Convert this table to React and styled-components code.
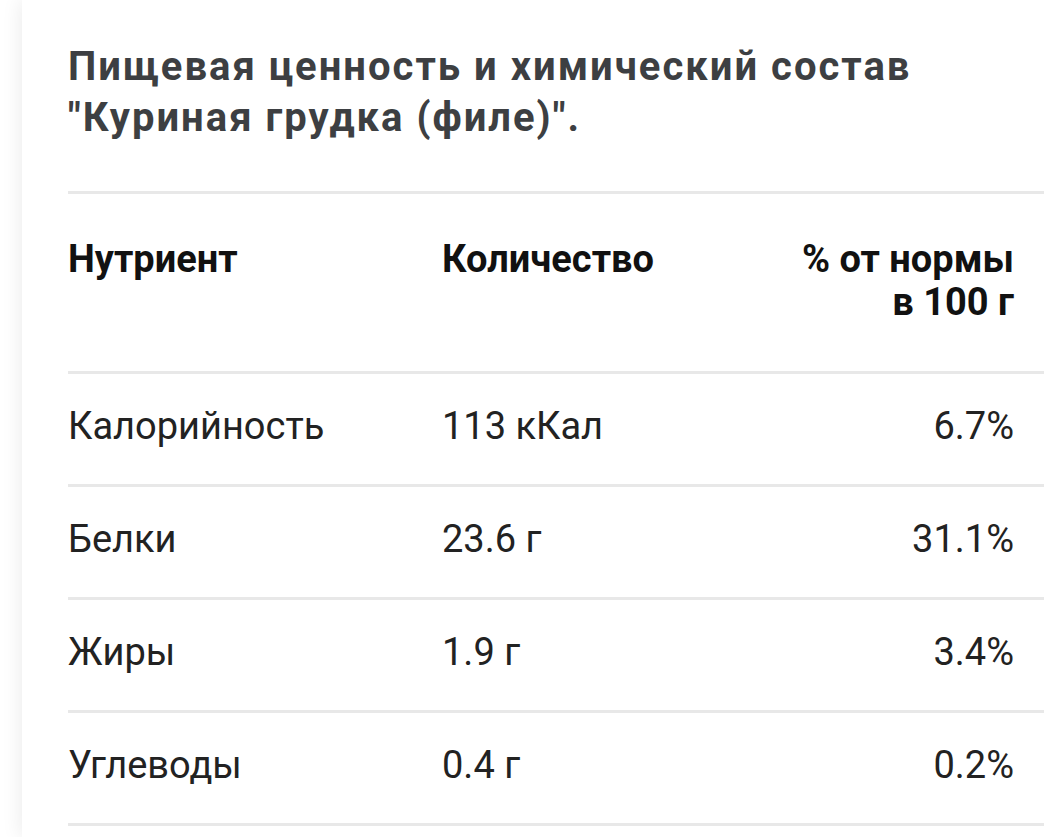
import React from "react";
import styled, { createGlobalStyle } from "styled-components";

const Global = createGlobalStyle`
  html, body { margin: 0; padding: 0; background: #fff; }
  body { font-family: Roboto, "Liberation Sans", Arial, sans-serif; }
`;

const Page = styled.div`
  width: 1044px;
  height: 837px;
  overflow: hidden;
  background: #fff;
  padding-left: 22px;
  box-sizing: border-box;
`;

const Card = styled.div`
  height: 100%;
  background: #fff;
  box-shadow: 0 0 20px rgba(0, 0, 0, 0.09);
  padding: 41px 0 0 46px;
  box-sizing: border-box;
`;

const Title = styled.h1`
  margin: 0 0 48px;
  font-size: 40px;
  line-height: 51px;
  font-weight: 700;
  color: #3d3f42;
  letter-spacing: 2px;
`;

const Table = styled.div`
  display: flex;
  flex-direction: column;
  border-bottom: 3px solid #e8e8e8;
`;

const Row = styled.div`
  display: grid;
  grid-template-columns: 374px 1fr auto;
  border-top: 3px solid #e8e8e8;
  padding: ${(p) => (p.$head ? "44px 30px 47px 0" : "31px 30px 36px 0")};
  font-size: 38px;
  line-height: 43px;
  font-weight: ${(p) => (p.$head ? 700 : 400)};
  color: ${(p) => (p.$head ? "#111" : "#222")};
`;

const Cell = styled.div`
  text-align: ${(p) => (p.$right ? "right" : "left")};
`;

const rows = [
  ["Калорийность", "113 кКал", "6.7%"],
  ["Белки", "23.6 г", "31.1%"],
  ["Жиры", "1.9 г", "3.4%"],
  ["Углеводы", "0.4 г", "0.2%"],
];

export default function App() {
  return (
    <Page>
      <Global />
      <Card>
        <Title>
          Пищевая ценность и химический состав
          <br />
          "Куриная грудка (филе)".
        </Title>
        <Table>
          <Row $head>
            <Cell>Нутриент</Cell>
            <Cell>Количество</Cell>
            <Cell $right>
              % от нормы
              <br />в 100 г
            </Cell>
          </Row>
          {rows.map((r) => (
            <Row key={r[0]}>
              <Cell>{r[0]}</Cell>
              <Cell>{r[1]}</Cell>
              <Cell $right>{r[2]}</Cell>
            </Row>
          ))}
        </Table>
      </Card>
    </Page>
  );
}
